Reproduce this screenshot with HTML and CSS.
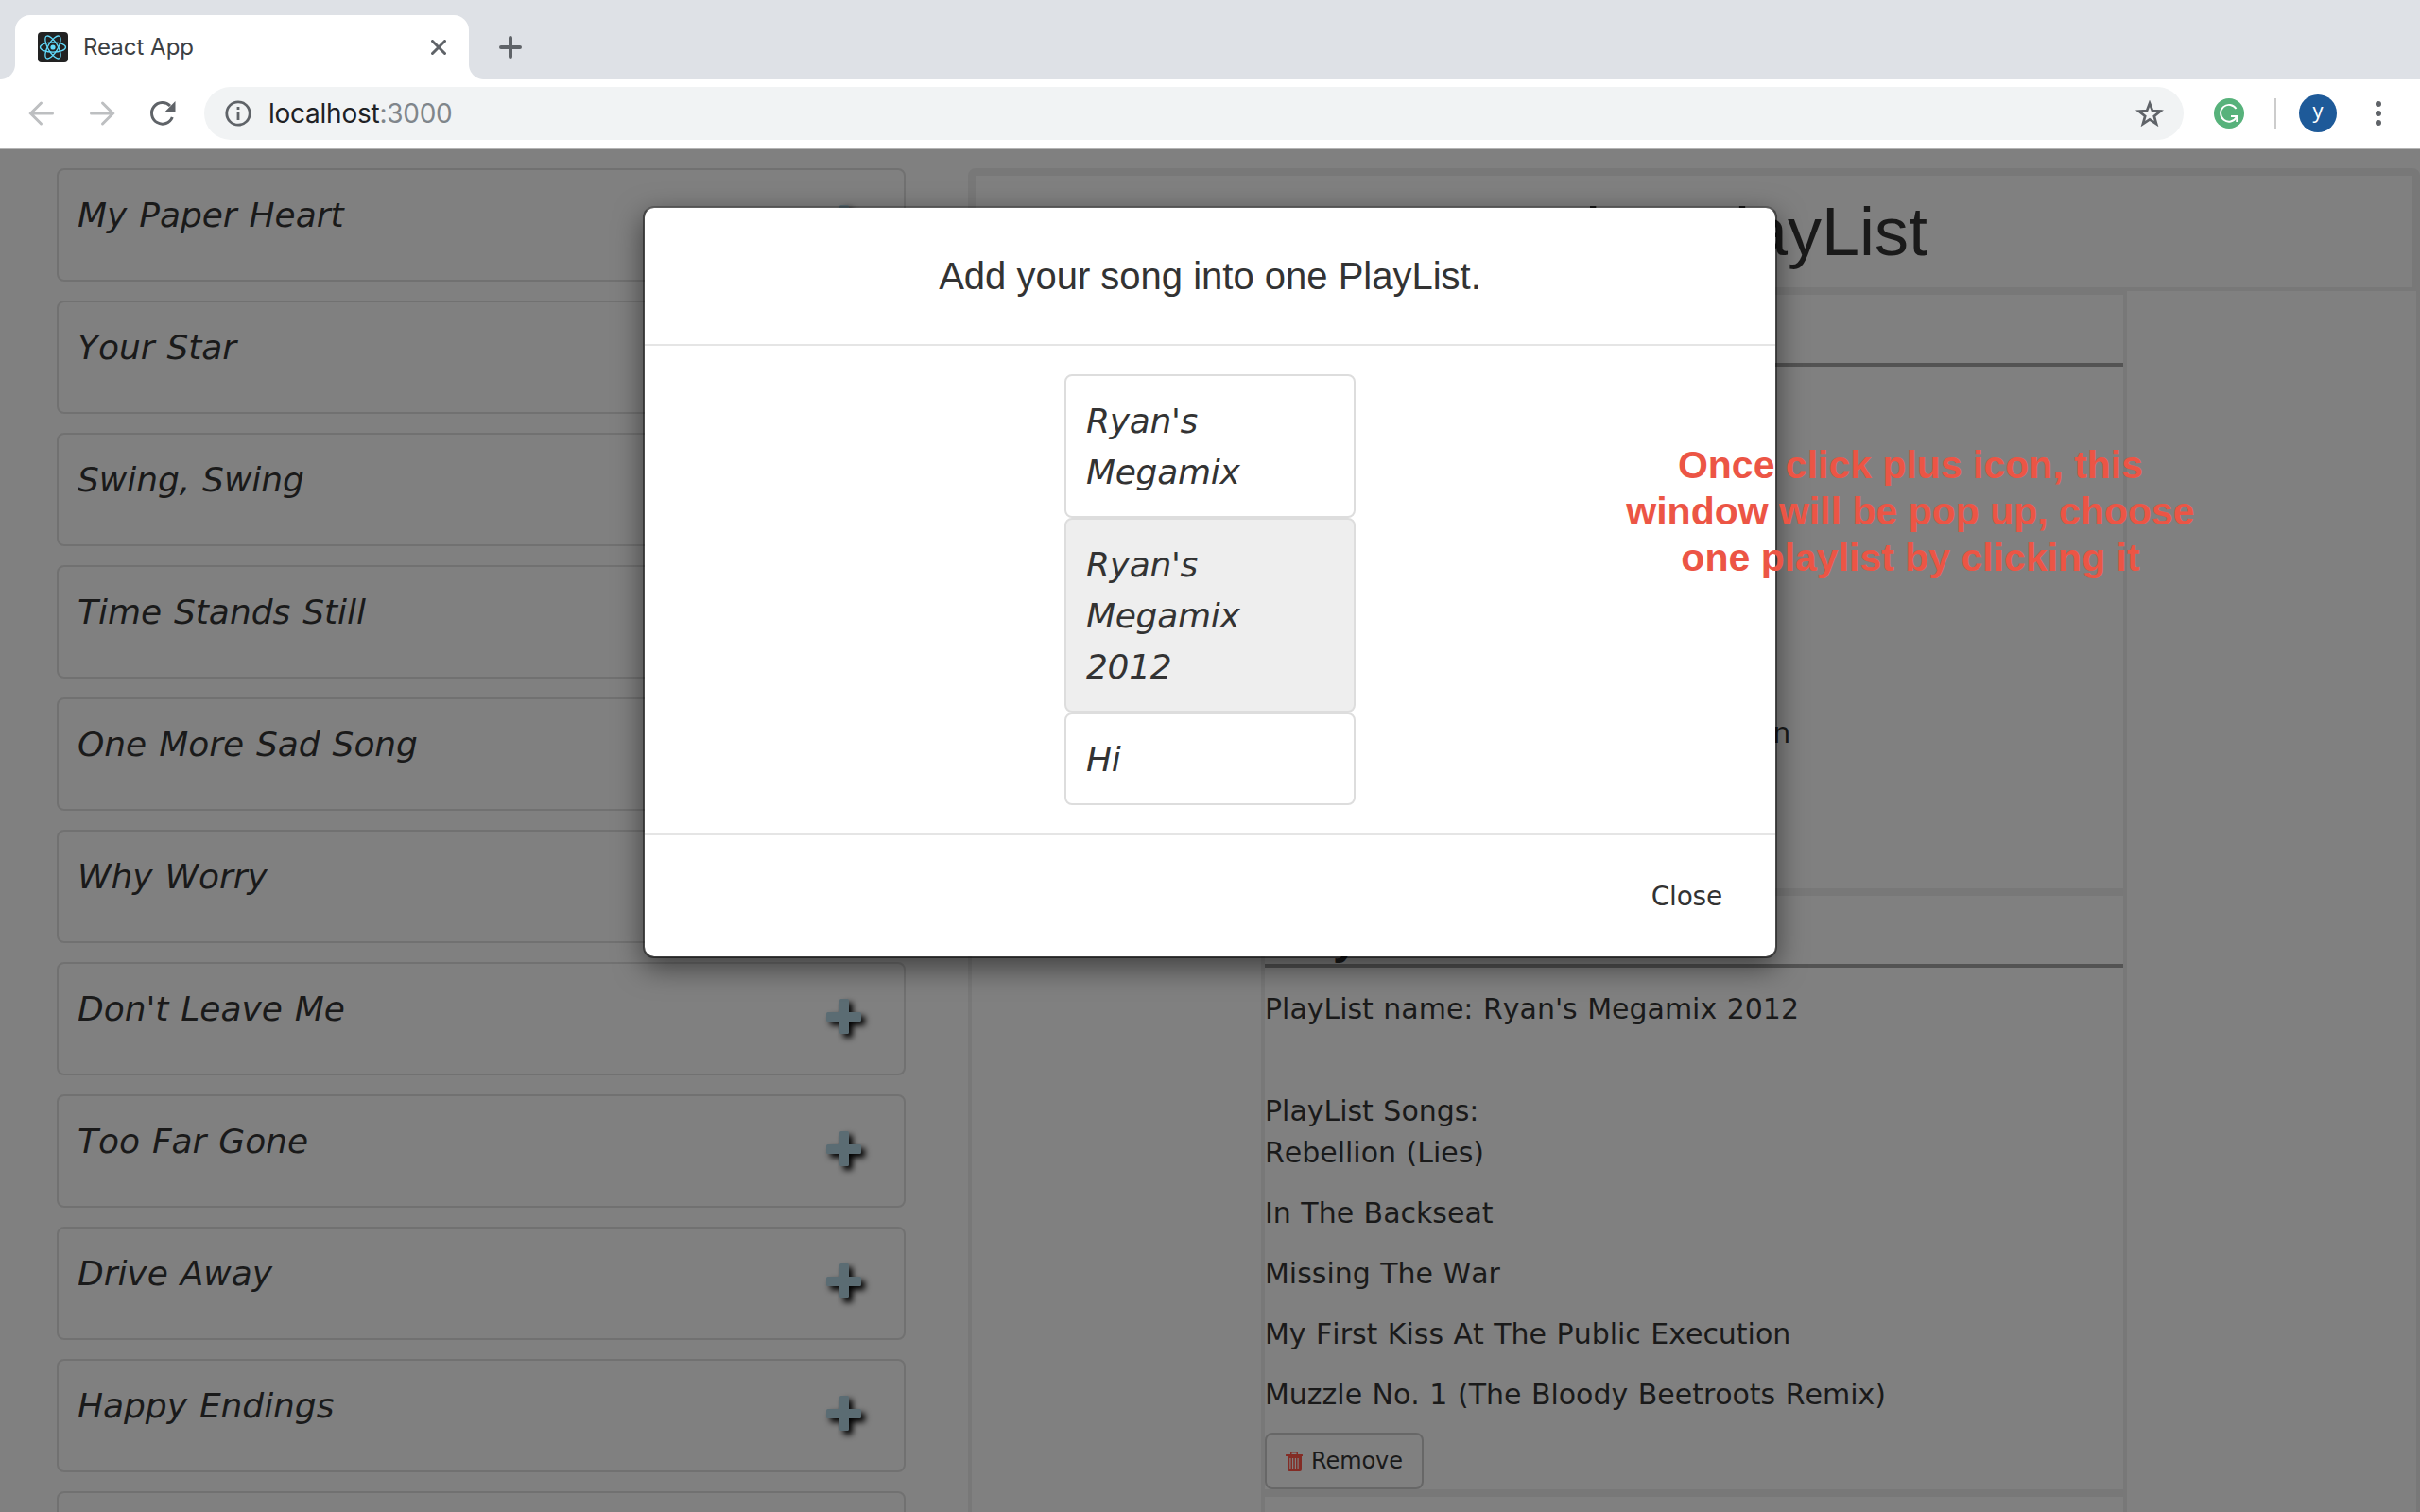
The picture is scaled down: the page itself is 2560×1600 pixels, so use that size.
FILE: index.html
```html
<!DOCTYPE html>
<html lang="en">
<head>
<meta charset="utf-8">
<title>React App</title>
<link rel="stylesheet" href="styles.css">
</head>
<body>
<svg width="0" height="0" class="defs">
  <symbol id="plus" viewBox="0 0 37 37"><path d="M15.500 0h7a1.500 1.500 0 0 1 1.500 1.500V14h11.500A1.500 1.500 0 0 1 37 15.500v7a1.500 1.500 0 0 1-1.500 1.500H24v11.500a1.500 1.500 0 0 1-1.500 1.500h-7a1.500 1.500 0 0 1-1.500-1.500V24H1.500A1.500 1.500 0 0 1 0 22.500v-7A1.500 1.500 0 0 1 1.500 14H14V1.500A1.500 1.500 0 0 1 15.500 0z"/></symbol>
  <symbol id="trash" viewBox="0 0 18 21"><path fill-rule="evenodd" d="M6.500 0h5q1.500 0 1.500 1.500V3h4.500q.5 0 .5.500V5h-1v14q0 2-2 2h-11q-2 0-2-2V5H0V3.500Q0 3 .5 3H5V1.500Q5 0 6.500 0zM6.500 1.500V3h5V1.500zM4.300 7v11h1.200V7zM7 7v11h1.200V7zM9.800 7v11H11V7zM12.500 7v11h1.200V7z"/></symbol>
</svg>

<header class="tabs">
  <div class="tab">
    <svg class="favicon" viewBox="0 0 32 32"><rect width="32" height="32" rx="4" fill="#222"/><g fill="none" stroke="#61dafb" stroke-width="1.300"><ellipse cx="16" cy="16" rx="13.500" ry="5.200"/><ellipse cx="16" cy="16" rx="13.500" ry="5.200" transform="rotate(60 16 16)"/><ellipse cx="16" cy="16" rx="13.500" ry="5.200" transform="rotate(120 16 16)"/></g><circle cx="16" cy="16" r="2.600" fill="#61dafb"/></svg>
    <span class="tab-title">React App</span>
    <svg class="tab-close" viewBox="0 0 16 16"><path d="M1.500 1.500l13 13M14.500 1.500l-13 13" stroke="#5f6368" stroke-width="3" stroke-linecap="round"/></svg>
  </div>
  <svg class="new-tab" viewBox="0 0 24 24"><path d="M12 2v20M2 12h20" stroke="#5f6368" stroke-width="4" stroke-linecap="round"/></svg>
</header>

<nav class="toolbar">
  <svg class="nav-icon" viewBox="0 0 28 28" stroke="#bdbfc1"><path d="M25.500 14H3M13.500 3L2.500 14l11 11"/></svg>
  <svg class="nav-icon" viewBox="0 0 28 28" stroke="#bdbfc1"><path d="M2.500 14H25M14.500 3l11 11-11 11"/></svg>
  <svg class="nav-icon" viewBox="0 0 28 28" stroke="#5f6368"><path stroke-linecap="butt" d="M24.300 18A11.300 11.300 0 1 1 22 6"/><path fill="#5f6368" stroke="none" d="M27.500 1v11.200h-11z"/></svg>
  <div class="omnibox">
    <svg class="info" viewBox="0 0 28 28"><circle cx="14" cy="14" r="12.200" fill="none" stroke="#5f6368" stroke-width="2.800"/><path d="M14 12.500v8.500M14 7v3" stroke="#5f6368" stroke-width="2.800"/></svg>
    <span class="url">localhost<span class="port">:3000</span></span>
    <svg class="star" viewBox="0 0 30 28"><path d="M15 3.300l3 7.900 8.400.4-6.600 5.300 2.300 8.200-7.100-4.700-7.100 4.700 2.300-8.200-6.600-5.300 8.400-.4z" fill="none" stroke="#5f6368" stroke-width="2.700"/></svg>
  </div>
  <svg class="grammarly" viewBox="0 0 32 32"><circle cx="16" cy="16" r="16" fill="#57b27b"/><path d="M23.500 11A8.900 8.900 0 1 0 23.800 20" fill="none" stroke="#fff" stroke-width="1.900"/><path d="M18 19h6.200v6" fill="none" stroke="#fff" stroke-width="1.900"/></svg>
  <div class="divider"></div>
  <div class="avatar">y</div>
  <div class="dots"><i></i><i></i><i></i></div>
</nav>

<main class="page">
  <ul class="songs">
    <li class="song">My Paper Heart<svg><use href="#plus"/></svg></li>
    <li class="song">Your Star<svg><use href="#plus"/></svg></li>
    <li class="song">Swing, Swing<svg><use href="#plus"/></svg></li>
    <li class="song">Time Stands Still<svg><use href="#plus"/></svg></li>
    <li class="song">One More Sad Song<svg><use href="#plus"/></svg></li>
    <li class="song">Why Worry<svg><use href="#plus"/></svg></li>
    <li class="song">Don't Leave Me<svg><use href="#plus"/></svg></li>
    <li class="song">Too Far Gone<svg><use href="#plus"/></svg></li>
    <li class="song">Drive Away<svg><use href="#plus"/></svg></li>
    <li class="song">Happy Endings<svg><use href="#plus"/></svg></li>
    <li class="song"></li>
  </ul>

  <section class="panel">
    <h1 class="panel-title">Noah's PlayList</h1>
    <div class="lists">
      <article class="playlist">
        <h3>PlayList</h3>
        <p class="name">PlayList name: Ryan's Megamix</p>
        <p class="label">PlayList Songs:</p>
        <p>Rebellion (Lies)</p>
        <p>In The Backseat</p>
        <p>Missing The War</p>
        <p>My First Kiss At The Public Execution</p>
        <p>Muzzle No. 1</p>
        <button class="remove"><svg><use href="#trash"/></svg>Remove</button>
      </article>
      <article class="playlist">
        <h3>PlayList</h3>
        <p class="name">PlayList name: Ryan's Megamix 2012</p>
        <p class="label">PlayList Songs:</p>
        <p>Rebellion (Lies)</p>
        <p>In The Backseat</p>
        <p>Missing The War</p>
        <p>My First Kiss At The Public Execution</p>
        <p>Muzzle No. 1 (The Bloody Beetroots Remix)</p>
        <button class="remove"><svg><use href="#trash"/></svg>Remove</button>
      </article>
      <article class="playlist"></article>
    </div>
  </section>
</main>

<div class="modal">
  <div class="modal-header">Add your song into one PlayList.</div>
  <div class="modal-body">
    <ul class="choices">
      <li>Ryan's Megamix</li>
      <li class="active">Ryan's Megamix 2012</li>
      <li>Hi</li>
    </ul>
  </div>
  <div class="modal-footer">Close</div>
</div>

<div class="note">Once click plus icon, this<br>window will be pop up, choose<br>one playlist by clicking it</div>
</body>
</html>
```
FILE: styles.css
```css
* { box-sizing: border-box; margin: 0; padding: 0; }
body { width: 2560px; height: 1600px; overflow: hidden; position: relative; background: #808080; display: flex; flex-direction: column; font-family: "DejaVu Sans", sans-serif; color: #1a1a1a; }
svg { display: block; flex: none; }
.defs { position: absolute; }
ul { list-style: none; }

.tabs { flex: none; height: 84px; background: #dee1e6; display: flex; align-items: flex-end; }
.tab { position: relative; width: 480px; height: 68px; margin-left: 16px; padding: 0 24px; background: #fff; border-radius: 16px 16px 0 0; display: flex; align-items: center; }
.tab::before, .tab::after { content: ""; position: absolute; bottom: 0; width: 16px; height: 16px; }
.tab::before { left: -16px; background: radial-gradient(circle at 0 0, #dee1e6 15.5px, #fff 16.5px); }
.tab::after { right: -16px; background: radial-gradient(circle at 100% 0, #dee1e6 15.5px, #fff 16.5px); }
.favicon { width: 32px; height: 32px; }
.tab-title { margin-left: 16px; flex: 1; font: 24px/32px Inter, sans-serif; color: #3c4043; }
.tab-close { width: 16px; height: 16px; }
.new-tab { width: 24px; height: 24px; margin: 0 0 22px 32px; }

.toolbar { flex: none; height: 74px; background: #fff; border-bottom: 1px solid #b4b4b4; display: flex; align-items: center; padding: 0 0 1px 30px; }
.nav-icon { width: 28px; height: 28px; margin-right: 36px; fill: none; stroke-width: 3; stroke-linecap: round; }
.nav-icon:nth-child(3) { margin-right: 30px; }
.omnibox { width: 2094px; height: 56px; border-radius: 28px; background: #f1f3f4; display: flex; align-items: center; padding: 0 21px 0 22px; }
.info { width: 28px; height: 28px; }
.url { flex: 1; margin-left: 18px; font: 28px/36px Inter, sans-serif; letter-spacing: -0.25px; color: #202124; }
.port { color: #80868b; }
.star { width: 30px; height: 28px; }
.grammarly { width: 32px; height: 32px; margin-left: 32px; }
.divider { width: 2px; height: 32px; margin-left: 32px; background: #ccc; }
.avatar { width: 40px; height: 40px; margin-left: 24px; border-radius: 50%; background: #1e5a99; color: #fff; font: 22px/32px "Open Sans", sans-serif; text-align: center; }
.dots { margin-left: 41px; display: flex; flex-direction: column; gap: 4px; }
.dots i { width: 6px; height: 6px; border-radius: 50%; background: #5f6368; }

.page { flex: 1; min-height: 0; display: flex; padding: 20px 0 0 60px; overflow: hidden; }
.songs { width: 898px; display: flex; flex-direction: column; gap: 20px; }
.song { flex: none; height: 120px; border: 2px solid #717171; border-radius: 8px; padding: 21px 45px 0 20px; display: flex; justify-content: space-between; font-style: italic; font-size: 36px; line-height: 54px; font-kerning: none; word-spacing: 1.6px; letter-spacing: -0.05px; }
.song svg { width: 37px; height: 37px; margin-top: 16px; overflow: visible; fill: #5b6c73; filter: drop-shadow(4px 4px 3px #000); }

.panel { width: 1536px; flex: none; height: 1600px; margin-left: 66px; border: 4px solid #787878; border-radius: 8px; }
.panel-title { height: 126px; border: 4px solid #787878; text-align: center; font: 72px/118px "Liberation Sans", Arial, sans-serif; }
.lists { width: 916px; margin-left: 306px; }
.playlist { height: 636px; border: 4px solid #787878; font-size: 30px; line-height: 44px; font-kerning: none; word-spacing: 1px; letter-spacing: -0.02px; }
.playlist h3 { height: 76px; border-bottom: 4px solid #535353; font: bold 48px/90px "Liberation Sans", Arial, sans-serif; margin-bottom: 22px; }
.playlist p { margin-bottom: 20px; white-space: nowrap; }
.playlist .name { margin-bottom: 64px; }
.playlist .label { margin-bottom: 0; }
.remove { width: 168px; height: 60px; margin-top: -2px; display: flex; align-items: center; padding-left: 20px; background: none; border: 2px solid #676767; border-radius: 8px; font: 24px/36px "DejaVu Sans", sans-serif; color: #1a1a1a; letter-spacing: -0.1px; }
.remove svg { width: 18px; height: 21px; margin-right: 9px; fill: #832c25; }

.modal { position: absolute; left: 680px; top: 218px; width: 1200px; height: 796px; background: #fff; background-clip: padding-box; border: 2px solid; border-color: rgba(0,0,0,.25) rgba(0,0,0,.42) rgba(0,0,0,.52); border-radius: 12px; box-shadow: 0 10px 30px rgba(0,0,0,.5); color: #333; }
.modal-header { height: 146px; border-bottom: 2px solid #e5e5e5; text-align: center; font: 40px/144px "Liberation Sans", Arial, sans-serif; }
.modal-body { height: 516px; padding-top: 30px; display: flex; justify-content: center; align-items: flex-start; }
.choices { width: 308px; }
.choices li { padding: 21px 60px 19px 21px; border: 2px solid #ddd; border-radius: 8px; font-size: 36px; line-height: 54px; font-style: italic; font-kerning: none; letter-spacing: -0.3px; }
.choices .active { background: #eee; }
.modal-footer { height: 130px; border-top: 2px solid #e5e5e5; padding-right: 56px; text-align: right; font-size: 28px; line-height: 130px; letter-spacing: -0.2px; }

.note { position: absolute; left: 1621px; top: 468px; width: 800px; text-align: center; font: bold 41px/49px "Liberation Sans", Arial, sans-serif; color: #ec5545; }
```
